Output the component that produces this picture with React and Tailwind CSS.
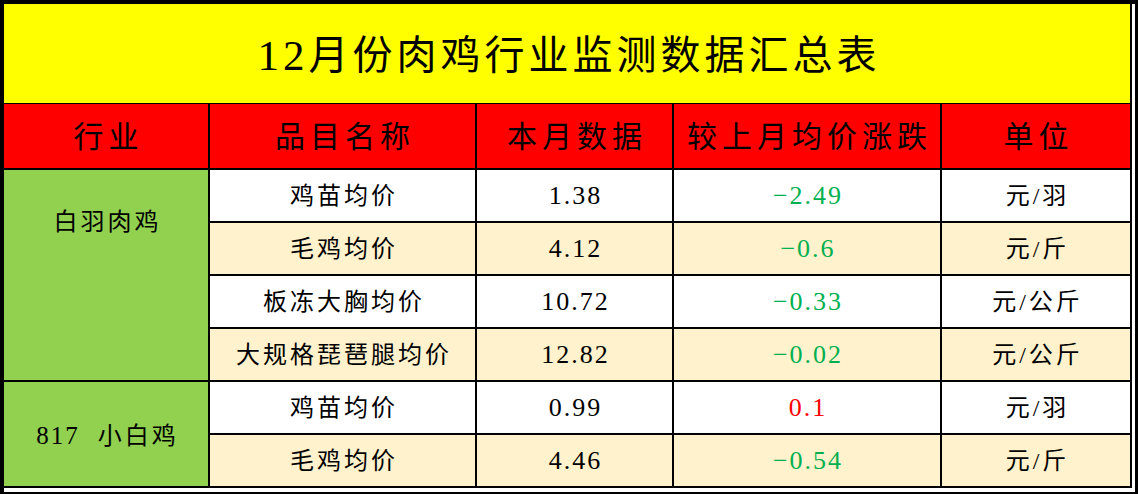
import React from "react";

const rows = [
  { name: "鸡苗均价", val: "1.38", chg: "−2.49", up: false, unit: "元/羽", bg: "bg-white" },
  { name: "毛鸡均价", val: "4.12", chg: "−0.6", up: false, unit: "元/斤", bg: "bg-[#fff2cc]" },
  { name: "板冻大胸均价", val: "10.72", chg: "−0.33", up: false, unit: "元/公斤", bg: "bg-white" },
  { name: "大规格琵琶腿均价", val: "12.82", chg: "−0.02", up: false, unit: "元/公斤", bg: "bg-[#fff2cc]" },
  { name: "鸡苗均价", val: "0.99", chg: "0.1", up: true, unit: "元/羽", bg: "bg-white" },
  { name: "毛鸡均价", val: "4.46", chg: "−0.54", up: false, unit: "元/斤", bg: "bg-[#fff2cc]" },
];

const headers = ["行业", "品目名称", "本月数据", "较上月均价涨跌", "单位"];

export default function App() {
  return (
    <div className="w-[1138px] h-[494px] bg-white border-t-4 border-l-4 border-r-[3px] border-b-2 border-black pr-[3px] pb-[4px] font-['Liberation_Serif','Noto_Sans_CJK_SC',serif] text-black overflow-hidden">
      <div className="h-[484px] bg-black border-r-2 border-black flex flex-col">
        <div className="h-[99px] bg-[#ffff00] flex items-center justify-center pt-1 pl-[4px] text-[40px] tracking-[4px] leading-none mb-px">
          <span className="text-[43px]">12</span>月份肉鸡行业监测数据汇总表
        </div>
        <div className="grid grid-cols-[204px_265px_195px_266px_188px] gap-x-[2px] h-[64px] mb-[2px]">
          {headers.map((h) => (
            <div key={h} className="bg-[#ff0000] flex items-center justify-center pl-[5px] pt-[2px] text-[30px] tracking-[5px] leading-none">
              {h}
            </div>
          ))}
        </div>
        <div className="grid grid-cols-[204px_265px_195px_266px_188px] grid-rows-[repeat(6,51px)] gap-[2px] text-[24px] tracking-[3px] leading-[30px]">
          <div className="col-start-1 row-start-1 row-span-4 bg-[#92d050] flex justify-center items-start pt-[37px] pl-[3px]">
            白羽肉鸡
          </div>
          <div className="col-start-1 row-start-5 row-span-2 bg-[#92d050] flex justify-center items-center pt-[4px] pl-[3px] whitespace-pre">
            <span className="text-[25px] tracking-[2px]">817</span>
            {"  小白鸡"}
          </div>
          {rows.map((r, i) => (
            <React.Fragment key={i}>
              <div className={`${r.bg} flex items-center justify-center pl-[3px]`}>{r.name}</div>
              <div className={`${r.bg} flex items-center justify-center pl-[2px] text-[26px] tracking-[2px]`}>{r.val}</div>
              <div className={`${r.bg} flex items-center justify-center pl-[2px] text-[26px] tracking-[2px] ${r.up ? "text-[#ff0000]" : "text-[#00b050]"}`}>
                {r.chg}
              </div>
              <div className={`${r.bg} flex items-center justify-center pl-[3px]`}>{r.unit}</div>
            </React.Fragment>
          ))}
        </div>
      </div>
    </div>
  );
}
